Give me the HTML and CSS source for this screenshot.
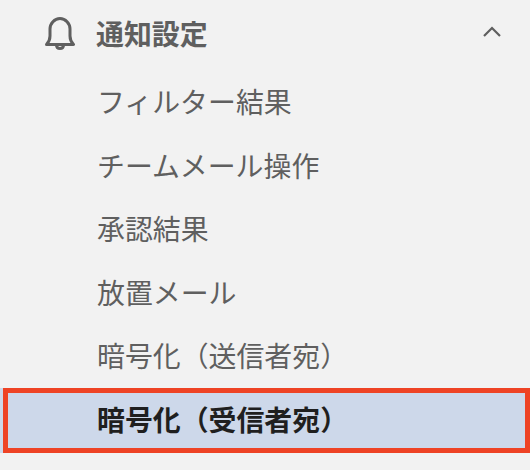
FILE: index.html
```html
<!DOCTYPE html>
<html lang="ja">
<head>
  <meta charset="utf-8">
  <title>通知設定</title>
  <link rel="stylesheet" href="styles.css">
</head>
<body>
  <div class="menu">
    <div class="menu-head">
      <svg class="bell" viewBox="0 0 30 33" width="30" height="33" fill="none" stroke="#5f5f5f" stroke-width="3" stroke-linejoin="round" stroke-linecap="round">
        <path d="M1.500 27.500c2.500-2.600 3.500-4.600 3.500-8.500v-7C5 6.500 9.500 1.500 15 1.500S25 6.500 25 12v7c0 3.900 1 5.900 3.500 8.500z"/>
        <path d="M11.500 28c0 2.500 1.500 3.500 3.500 3.500s3.500-1 3.500-3.500"/>
      </svg>
      <span class="menu-title">通知設定</span>
      <svg class="chevron" viewBox="0 0 18 11" width="18" height="11" fill="none" stroke="#5f5f5f" stroke-width="2.200">
        <path d="M1 10l8-8 8 8"/>
      </svg>
    </div>
    <a class="menu-item">フィルター結果</a>
    <a class="menu-item">チームメール操作</a>
    <a class="menu-item">承認結果</a>
    <a class="menu-item">放置メール</a>
    <a class="menu-item">暗号化（送信者宛）</a>
    <a class="menu-item selected">暗号化（受信者宛）</a>
  </div>
</body>
</html>
```

FILE: styles.css
```css
html, body {
  margin: 0;
  height: 100%;
  background-color: #f2f2f2;
}
body {
  overflow: hidden;
  font-family: "Noto Sans CJK JP", "Noto Sans", sans-serif;
  color: #5f5f5f;
}
.menu {
  display: flex;
  flex-direction: column;
}
.menu-head {
  display: flex;
  align-items: center;
  height: 66px;
  margin-bottom: 4px;
  padding-left: 45px;
  padding-right: 29px;
}
.bell {
  flex: none;
  margin-right: 21px;
}
.menu-title {
  flex: 1;
  font-size: 27.900px;
  font-weight: 700;
}
.chevron {
  flex: none;
  margin-bottom: 3px;
}
.menu-item {
  display: block;
  height: 63.6px;
  line-height: 63.6px;
  padding-left: 97px;
  font-size: 27.900px;
}
.selected {
  position: relative;
  height: 65px;
  background-color: #cdd8ea;
  color: #1f1f1f;
  font-weight: 700;
}
.selected::after {
  content: "";
  position: absolute;
  top: 0;
  left: 3px;
  right: 0;
  bottom: 0;
  border: 5px solid #ee4325;
}
```
